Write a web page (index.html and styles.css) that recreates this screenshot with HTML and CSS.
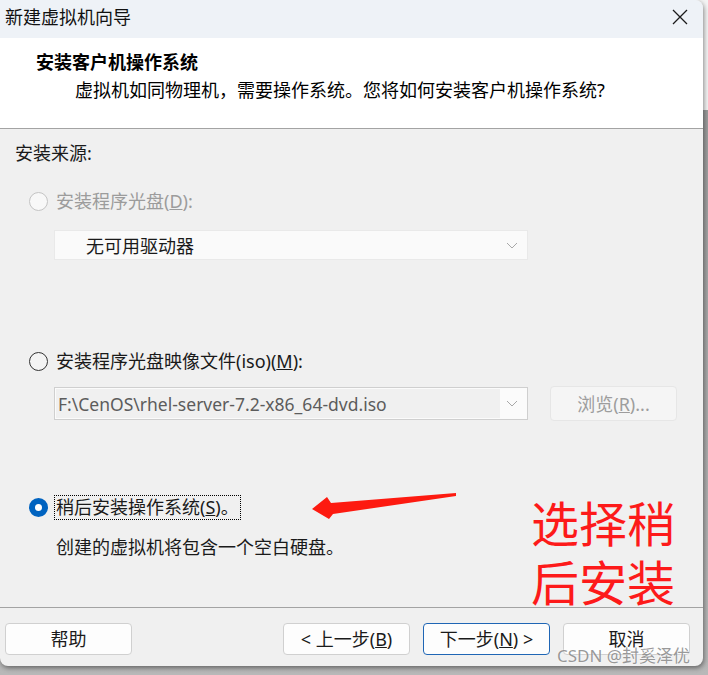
FILE: index.html
```html
<!DOCTYPE html>
<html lang="zh-CN">
<head>
<meta charset="utf-8">
<title>新建虚拟机向导</title>
<link rel="stylesheet" href="styles.css">
</head>
<body>
<div class="dialog">
  <div class="titlebar">
    <span class="title">新建虚拟机向导</span>
    <svg class="close" width="16" height="16" viewBox="0 0 16 16"><path d="M1 1L15 15M15 1L1 15" stroke="#1b1b1b" stroke-width="1.3" fill="none"/></svg>
  </div>
  <div class="header">
    <div class="h-title">安装客户机操作系统</div>
    <div class="h-sub">虚拟机如同物理机，需要操作系统。您将如何安装客户机操作系统?</div>
  </div>
  <div class="content">
    <div class="section-label">安装来源:</div>
    <div class="option disabled opt1"><span class="radio"></span><span class="label">安装程序光盘(<u>D</u>):</span></div>
    <div class="combo combo1"><span class="combo-text">无可用驱动器</span><svg class="chev" width="12" height="7" viewBox="0 0 12 7"><path d="M1 1L6 6L11 1" stroke="#a8a8a8" stroke-width="1" fill="none"/></svg></div>
    <div class="option opt2"><span class="radio"></span><span class="label">安装程序光盘映像文件(iso)(<u>M</u>):</span></div>
    <div class="iso-row">
      <div class="combo combo2"><span class="edit">F:\CenOS\rhel-server-7.2-x86_64-dvd.iso</span><svg class="chev" width="12" height="7" viewBox="0 0 12 7"><path d="M1 1L6 6L11 1" stroke="#a8a8a8" stroke-width="1" fill="none"/></svg></div>
      <button class="btn browse" disabled>浏览(<u>R</u>)...</button>
    </div>
    <div class="option opt3 checked"><span class="radio"></span><span class="label focus">稍后安装操作系统(<u>S</u>)。</span></div>
    <div class="desc">创建的虚拟机将包含一个空白硬盘。</div>
    <svg class="arrow" width="150" height="32" viewBox="310 490 150 32"><polygon points="312,509 327,497 331,503 456,493 456,496 333,514 329,519" fill="#fd1a10"/></svg>
    <div class="annot">选择稍<br>后安装</div>
  </div>
  <div class="footer">
    <button class="btn">帮助</button>
    <div class="spacer"></div>
    <button class="btn">&lt; 上一步(<u>B</u>)</button>
    <button class="btn primary">下一步(<u>N</u>) &gt;</button>
    <button class="btn">取消</button>
  </div>
  <div class="watermark">CSDN @封奚泽优</div>
</div>
</body>
</html>
```

FILE: styles.css
```css
html, body {
  margin: 0;
  padding: 0;
}
body {
  width: 708px;
  height: 675px;
  overflow: hidden;
  background: linear-gradient(to bottom, #f4f4f4 0, #f4f4f4 110px, #9c9c9c 110px, #b8b8b8 100%);
  font-family: "Noto Sans", "Noto Sans CJK SC", sans-serif;
  color: #1a1a1a;
}
.dialog {
  width: 703px;
  height: 666px;
  background: #f0f0f0;
  border-radius: 0 8px 8px 8px;
  display: flex;
  flex-direction: column;
  position: relative;
  overflow: hidden;
  box-shadow: 1px 2px 5px rgba(0, 0, 0, 0.45);
}
.titlebar {
  height: 38px;
  flex: none;
  background: #eef2f7;
  display: flex;
  justify-content: space-between;
  align-items: flex-start;
  padding: 5px 15px 0 5px;
  box-sizing: border-box;
}
.title {
  font-size: 18px;
  line-height: 24px;
  color: #111;
}
.close {
  margin-top: 4px;
}
.header {
  height: 91px;
  flex: none;
  background: #fff;
  border-bottom: 1px solid #a3a3a3;
  box-sizing: border-box;
  padding: 12px 0 0 36px;
}
.h-title {
  font-size: 18px;
  line-height: 24px;
  font-weight: 700;
  color: #000;
}
.h-sub {
  font-size: 18px;
  line-height: 24px;
  margin-top: 4px;
  padding-left: 39px;
  color: #000;
}
.content {
  flex: 1;
  position: relative;
  padding: 12px 0 0 0;
  box-sizing: border-box;
}
.section-label {
  font-size: 18px;
  line-height: 24px;
  padding-left: 15px;
}
.option {
  display: flex;
  align-items: center;
  height: 25px;
  padding-left: 29px;
  font-size: 18px;
}
.label {
  line-height: 23px;
  margin-left: 6px;
  border: 1px dotted transparent;
  padding: 0 1px;
}
.label.focus {
  border-color: #000;
}
.radio {
  width: 19px;
  height: 19px;
  border-radius: 50%;
  box-sizing: border-box;
  border: 1px solid #333;
  background: #f4f4f4;
  flex: none;
}
.disabled .radio {
  border-color: #c4c4c4;
  background: #f8f8f8;
}
.disabled .label {
  color: #9c9c9c;
}
.checked .radio {
  border: 6px solid #0063c0;
  background: #fff;
}
.opt1 { margin-top: 24px; }
.opt2 { margin-top: 89px; }
.opt3 { margin-top: 74px; }
.combo {
  margin-left: 54px;
  width: 474px;
  box-sizing: border-box;
  display: flex;
  align-items: center;
  justify-content: space-between;
}
.combo1 {
  margin-top: 16px;
  height: 30px;
  background: #fafafa;
  border: 1px solid #e9e9e9;
  padding: 0 9px 0 31px;
  font-size: 18px;
  color: #1a1a1a;
}
.iso-row {
  display: flex;
  align-items: flex-start;
  margin-top: 12px;
  height: 35px;
}
.combo2 {
  margin-top: 1px;
  height: 33px;
  background: #fbfbfb;
  border: 1px solid #cfcfcf;
  padding: 1px 9px 1px 1px;
}
.edit {
  background: #f0f0f0;
  height: 29px;
  width: 444px;
  display: flex;
  align-items: center;
  padding-left: 2px;
  box-sizing: border-box;
  font-family: "Noto Sans", sans-serif;
  font-size: 17.5px;
  color: #5c5c5c;
  white-space: nowrap;
}
.btn {
  font-family: "Noto Sans", "Noto Sans CJK SC", sans-serif;
  font-size: 18px;
  width: 127px;
  height: 32px;
  background: #fdfdfd;
  border: 1px solid #d0d0d0;
  border-radius: 4px;
  color: #1a1a1a;
  padding: 0;
  line-height: 28px;
}
.browse {
  margin-left: 22px;
  height: 35px;
  background: #f5f5f5;
  border-color: #e6e6e6;
  color: #9d9d9d;
}
.desc {
  font-size: 18px;
  line-height: 24px;
  margin-top: 15px;
  padding-left: 56px;
}
.arrow {
  position: absolute;
  left: 310px;
  top: 361px;
}
.annot {
  position: absolute;
  left: 531px;
  top: 363px;
  font-size: 48px;
  line-height: 59px;
  color: #fd1a1a;
  font-family: "Noto Sans CJK SC", sans-serif;
  z-index: 2;
}
.footer {
  height: 59px;
  flex: none;
  border-top: 1px solid #a3a3a3;
  box-sizing: border-box;
  display: flex;
  align-items: flex-start;
  padding: 15px 13px 0 5px;
  gap: 13px;
}
.spacer {
  flex: 1;
}
.primary {
  border-color: #1f66b5;
}
.watermark {
  position: absolute;
  left: 557px;
  top: 645px;
  font-size: 17px;
  line-height: 22px;
  color: rgba(120, 120, 120, 0.75);
  text-shadow: 0 0 2px rgba(255, 255, 255, 0.8);
  white-space: nowrap;
  z-index: 3;
}
```
